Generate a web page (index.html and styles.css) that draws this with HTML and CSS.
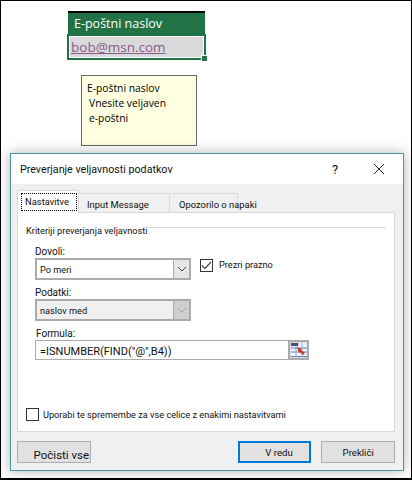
FILE: index.html
```html
<!DOCTYPE html>
<html lang="en">
<head>
    <meta charset="UTF-8">
    <meta name="viewport" content="width=device-width, initial-scale=1.0">
    <title>Preverjanje veljavnosti podatkov</title>
    <link rel="stylesheet" href="styles.css">
</head>
<body>
    <div class="sheet">
        <div class="cell-head">E-poštni naslov</div>
        <div class="cell-active">
            <div class="cell-value"><a>bob@msn.com</a></div>
            <span class="cell-handle"></span>
        </div>
        <div class="tip">
            <div class="tip-title">E-poštni naslov</div>
            <div class="tip-line">Vnesite veljaven</div>
            <div class="tip-line">e-poštni</div>
        </div>

        <div class="dialog">
            <div class="title-bar">
                <div class="title">Preverjanje veljavnosti podatkov</div>
                <div class="help">?</div>
                <svg class="close" width="12" height="12" viewBox="0 0 12 12">
                    <path d="M1 1 L11 11 M11 1 L1 11" stroke="#222" stroke-width="1" fill="none"/>
                </svg>
            </div>
            <div class="dialog-body">
                <div class="tabs">
                    <div class="tab tab-active"><span class="tab-focus">Nastavitve</span></div>
                    <div class="tab tab-input">Input Message</div>
                    <div class="tab tab-error">Opozorilo o napaki</div>
                </div>
                <div class="panel">
                    <div class="group-head">
                        <span class="group-text">Kriteriji preverjanja veljavnosti</span>
                        <div class="group-line"></div>
                    </div>
                    <div class="fields">
                        <label class="field-label">Dovoli:</label>
                        <div class="select-row">
                            <div class="select">
                                <div class="select-text">Po meri</div>
                                <div class="select-arrow">
                                    <svg width="10" height="6" viewBox="0 0 10 6"><path d="M1 1 L5 5 L9 1" stroke="#444" fill="none"/></svg>
                                </div>
                            </div>
                            <div class="check-box">
                                <svg width="11" height="9" viewBox="0 0 11 9"><path d="M1 4.5 L4 7.5 L10 1" stroke="#444" stroke-width="1.2" fill="none"/></svg>
                            </div>
                            <div class="check-text">Prezri prazno</div>
                        </div>
                        <label class="field-label label-data">Podatki:</label>
                        <div class="select select-off">
                            <div class="select-text">naslov med</div>
                            <div class="select-arrow">
                                <svg width="10" height="6" viewBox="0 0 10 6"><path d="M1 1 L5 5 L9 1" stroke="#a8a8a8" fill="none"/></svg>
                            </div>
                        </div>
                        <label class="field-label label-formula">Formula:</label>
                        <div class="formula-row">
                            <div class="formula-input">=ISNUMBER(FIND("@",B4))</div>
                            <div class="ref-btn">
                                <svg width="16" height="16" viewBox="0 0 16 16">
                                    <rect x="0" y="1" width="16" height="14" fill="#eef3fa"/>
                                    <path d="M0 2 H8 M0 6 H16 M0 10 H16 M0 14.5 H16" stroke="#5b84c4" fill="none"/>
                                    <path d="M5 1 V15 M11 1 V15" stroke="#8fabd8" fill="none"/>
                                    <rect x="0" y="1" width="7" height="3" fill="#44546a"/>
                                    <path d="M6 5 L11 7 L10 8 L14 11 L12 13 L9 10 L8 11 Z" fill="#d0321e"/>
                                </svg>
                            </div>
                        </div>
                    </div>
                    <div class="apply-row">
                        <div class="check-box check-empty"></div>
                        <div>Uporabi te spremembe za vse celice z enakimi nastavitvami</div>
                    </div>
                </div>
                <div class="buttons">
                    <button class="btn btn-clear">Počisti vse</button>
                    <button class="btn btn-ok">V redu</button>
                    <button class="btn btn-cancel">Prekliči</button>
                </div>
            </div>
        </div>
    </div>
</body>
</html>
```

FILE: styles.css
```css
html, body {
    margin: 0;
    padding: 0;
}
body {
    font-family: "Open Sans", "Noto Sans", Arial, sans-serif;
    font-size: 10.5px;
    color: #111;
    background: #fff;
}
.sheet {
    box-sizing: border-box;
    width: 412px;
    height: 480px;
    border: 1px solid #000;
    border-bottom-width: 2px;
    padding: 10px 7px 0 9px;
    overflow: hidden;
}
.cell-head {
    box-sizing: border-box;
    width: 137px;
    height: 23px;
    margin-left: 58px;
    padding: 0 0 0 6px;
    border-top: 2px solid #000;
    background: #217346;
    color: #fff;
    font-size: 12.5px;
    line-height: 21px;
}
.cell-active {
    position: relative;
    box-sizing: border-box;
    width: 139px;
    height: 26px;
    margin-left: 57px;
    border: 2px solid #217346;
}
.cell-value {
    height: 100%;
    box-sizing: border-box;
    border: 1px solid #fff;
    background: #d9d9d9;
    padding-left: 1px;
    font-size: 13.5px;
    line-height: 20px;
    color: #8e5a8e;
}
.cell-value a {
    text-decoration: underline;
}
.cell-handle {
    position: absolute;
    right: -3px;
    bottom: -3px;
    width: 5px;
    height: 5px;
    background: #217346;
    border: 1px solid #fff;
    border-width: 1px 0 0 1px;
}
.tip {
    box-sizing: border-box;
    width: 116px;
    height: 71px;
    margin: 15px 0 0 71px;
    padding: 5px 5px;
    border: 1px solid #666;
    background: #ffffe1;
    font-size: 10.3px;
    line-height: 15px;
    color: #000;
}
.tip-line {
    padding-left: 2px;
}
.dialog {
    box-sizing: border-box;
    width: 394px;
    height: 318px;
    margin-top: 7px;
    border: 1px solid #4b92ad;
    background: #f0f0f0;
    box-shadow: 0 0 12px rgba(0, 0, 0, 0.3);
    font-family: Roboto, "Open Sans", Arial, sans-serif;
}
.title-bar {
    display: flex;
    align-items: center;
    height: 30px;
    padding: 0 18px 0 9px;
    background: #fff;
}
.title {
    flex: 1;
    font-size: 10.7px;
}
.help {
    width: 41px;
    font-size: 13px;
}
.dialog-body {
    padding: 6px 8px 0 6px;
}
.tabs {
    display: flex;
    align-items: flex-end;
    height: 22px;
    font-size: 9.4px;
}
.tab {
    box-sizing: border-box;
    height: 19px;
    border: 1px solid #d9d9d9;
    border-bottom: none;
    white-space: nowrap;
    line-height: 22px;
}
.tab-active {
    position: relative;
    z-index: 1;
    width: 62px;
    height: 23px;
    margin-bottom: -1px;
    padding: 2px 0 0 3px;
    background: #fff;
}
.tab-focus {
    display: block;
    width: 50px;
    height: 16px;
    padding: 0 1px 0 3px;
    border: 1px dotted #000;
    line-height: 16px;
}
.tab-input {
    width: 91px;
    padding-left: 8px;
    border-left: none;
}
.tab-error {
    width: 68px;
    padding-left: 9px;
    border-left: none;
}
.panel {
    box-sizing: border-box;
    width: 378px;
    height: 220px;
    padding: 8px 8px 0 8px;
    border: 1px solid #d9d9d9;
    background: #fff;
    font-size: 9.2px;
}
.group-head {
    display: flex;
    align-items: flex-start;
    height: 14px;
}
.group-text {
    line-height: 19px;
}
.group-line {
    flex: 1;
    height: 1px;
    margin-top: 6px;
    background: #d9d9d9;
}
.fields {
    margin: 9px 0 0 9px;
}
.field-label {
    display: block;
    height: 14px;
    font-size: 10px;
    line-height: 16px;
}
.label-data {
    margin-top: 5px;
}
.label-formula {
    margin-top: 5px;
    padding-left: 1px;
}
.select-row {
    display: flex;
    align-items: flex-start;
}
.select {
    box-sizing: border-box;
    display: flex;
    width: 156px;
    height: 22px;
    border: 2px solid #ababab;
    background: #fff;
}
.select-text {
    flex: 1;
    padding-left: 3px;
    line-height: 20px;
    font-size: 9.200px;
}
.select-arrow {
    display: flex;
    align-items: center;
    justify-content: center;
    width: 15px;
    border-left: 1px solid #ababab;
    background: #e6e6e6;
}
.select-off {
    background: #f0f0f0;
}
.select-off .select-arrow {
    background: #cfcfcf;
}
.check-box {
    box-sizing: border-box;
    display: flex;
    align-items: center;
    justify-content: center;
    width: 13px;
    height: 13px;
    margin: 1px 6px 0 9px;
    border: 1px solid #333;
    background: #fff;
}
.check-text {
    font-size: 9.2px;
    line-height: 14px;
}
.formula-row {
    display: flex;
    width: 274px;
    height: 20px;
}
.formula-input {
    box-sizing: border-box;
    width: 253px;
    border: 1px solid #ababab;
    border-width: 1px 0 1px 1px;
    padding-left: 4px;
    font-size: 11px;
    line-height: 21px;
}
.ref-btn {
    box-sizing: border-box;
    display: flex;
    align-items: center;
    justify-content: center;
    width: 21px;
    border: 2px solid #ababab;
    background: #d9d9d9;
}
.apply-row {
    display: flex;
    align-items: center;
    margin-top: 47px;
    height: 14px;
}
.check-empty {
    margin: 0 4px 0 0;
}
.buttons {
    display: flex;
    margin-top: 9px;
}
.btn {
    box-sizing: border-box;
    width: 74px;
    height: 22px;
    padding: 0;
    border: 1px solid #adadad;
    background: #e1e1e1;
    font-family: inherit;
    font-size: 9.6px;
    color: #111;
}
.btn-clear {
    margin-right: 147px;
    padding: 5px 0 0 15px;
    font-size: 11.5px;
    white-space: nowrap;
}
.btn-ok {
    margin-right: 10px;
    padding-left: 9px;
    border: 2px solid #0078d7;
}
```
